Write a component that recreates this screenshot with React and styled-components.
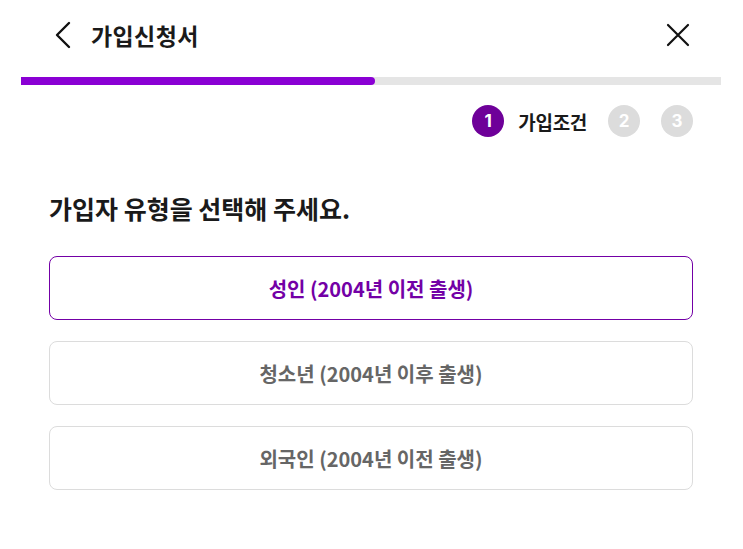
import React from "react";
import styled, { createGlobalStyle } from "styled-components";

const Global = createGlobalStyle`
  html, body { margin: 0; padding: 0; background: #fff; }
  body { font-family: "Noto Sans CJK KR", "Noto Sans", sans-serif; color: #1a1a1a; }
  * { box-sizing: border-box; }
`;

const Page = styled.div`
  width: 743px;
  min-height: 549px;
  background: #fff;
`;

const Header = styled.header`
  height: 70px;
  display: flex;
  align-items: center;
  padding: 0 53px 0 54px;
`;

const IconButton = styled.button`
  border: 0;
  background: none;
  padding: 0;
  display: flex;
  align-items: center;
  justify-content: center;
  cursor: pointer;
  color: #111;
`;

const Title = styled.h1`
  margin: 0 0 0 19px;
  font-size: 23px;
  font-weight: 700;
  letter-spacing: 0.4px;
  color: #1a1a1a;
  flex: 1;
`;

const Track = styled.div`
  margin: 7px 22px 0 21px;
  height: 8px;
  background: #e5e5e5;
`;

const Fill = styled.div`
  height: 100%;
  background: #8a00d4;
  border-radius: 0 4px 4px 0;
`;

const Steps = styled.div`
  display: flex;
  justify-content: flex-end;
  align-items: center;
  padding: 0 50px 0 0;
  margin-top: 20px;
`;

const StepDot = styled.span`
  width: 32px;
  height: 32px;
  border-radius: 50%;
  display: inline-flex;
  align-items: center;
  justify-content: center;
  color: #fff;
  font-family: "Inter", "Noto Sans", sans-serif;
  font-weight: 700;
  font-size: 17px;
  background: ${(p) => (p.$active ? "#6e0099" : "#dcdcdc")};
  margin-left: ${(p) => p.$gap || 0}px;
`;

const StepLabel = styled.span`
  margin-left: 14px;
  font-size: 19px;
  font-weight: 700;
  letter-spacing: -0.3px;
  color: #1a1a1a;
`;

const Content = styled.main`
  padding: 0 50px 0 49px;
`;

const Heading = styled.h2`
  margin: 54px 0 0;
  font-size: 25px;
  line-height: 34px;
  font-weight: 700;
  letter-spacing: 0;
  color: #1a1a1a;
`;

const Options = styled.div`
  margin-top: 31px;
  display: flex;
  flex-direction: column;
  gap: 21px;
`;

const Option = styled.button`
  height: 64px;
  width: 100%;
  border-radius: 8px;
  background: #fff;
  border: 1px solid ${(p) => (p.$selected ? "#7300a6" : "#dcdcdc")};
  color: ${(p) => (p.$selected ? "#7300a6" : "#666666")};
  font-family: "Noto Sans CJK KR", "Noto Sans", sans-serif;
  font-size: 20px;
  font-weight: 700;
  letter-spacing: 0;
  cursor: pointer;
`;

const Chevron = () => (
  <svg width="18" height="28" viewBox="0 0 18 28" fill="none">
    <polyline points="15,2 3,14 15,26" stroke="#111" strokeWidth="2.4" strokeLinecap="round" strokeLinejoin="round" />
  </svg>
);

const Close = () => (
  <svg width="24" height="24" viewBox="0 0 24 24" fill="none">
    <path d="M2 2 L22 22 M22 2 L2 22" stroke="#111" strokeWidth="2.2" strokeLinecap="round" />
  </svg>
);

const options = [
  { label: "성인 (2004년 이전 출생)", selected: true },
  { label: "청소년 (2004년 이후 출생)" },
  { label: "외국인 (2004년 이전 출생)" },
];

export default function App() {
  return (
    <Page>
      <Global />
      <Header>
        <IconButton aria-label="뒤로"><Chevron /></IconButton>
        <Title>가입신청서</Title>
        <IconButton aria-label="닫기"><Close /></IconButton>
      </Header>
      <Track>
        <Fill style={{ width: `${(354 / 700) * 100}%` }} />
      </Track>
      <Steps>
        <StepDot $active>1</StepDot>
        <StepLabel>가입조건</StepLabel>
        <StepDot $gap={21}>2</StepDot>
        <StepDot $gap={21}>3</StepDot>
      </Steps>
      <Content>
        <Heading>가입자 유형을 선택해 주세요.</Heading>
        <Options>
          {options.map((o) => (
            <Option key={o.label} $selected={o.selected}>{o.label}</Option>
          ))}
        </Options>
      </Content>
    </Page>
  );
}
